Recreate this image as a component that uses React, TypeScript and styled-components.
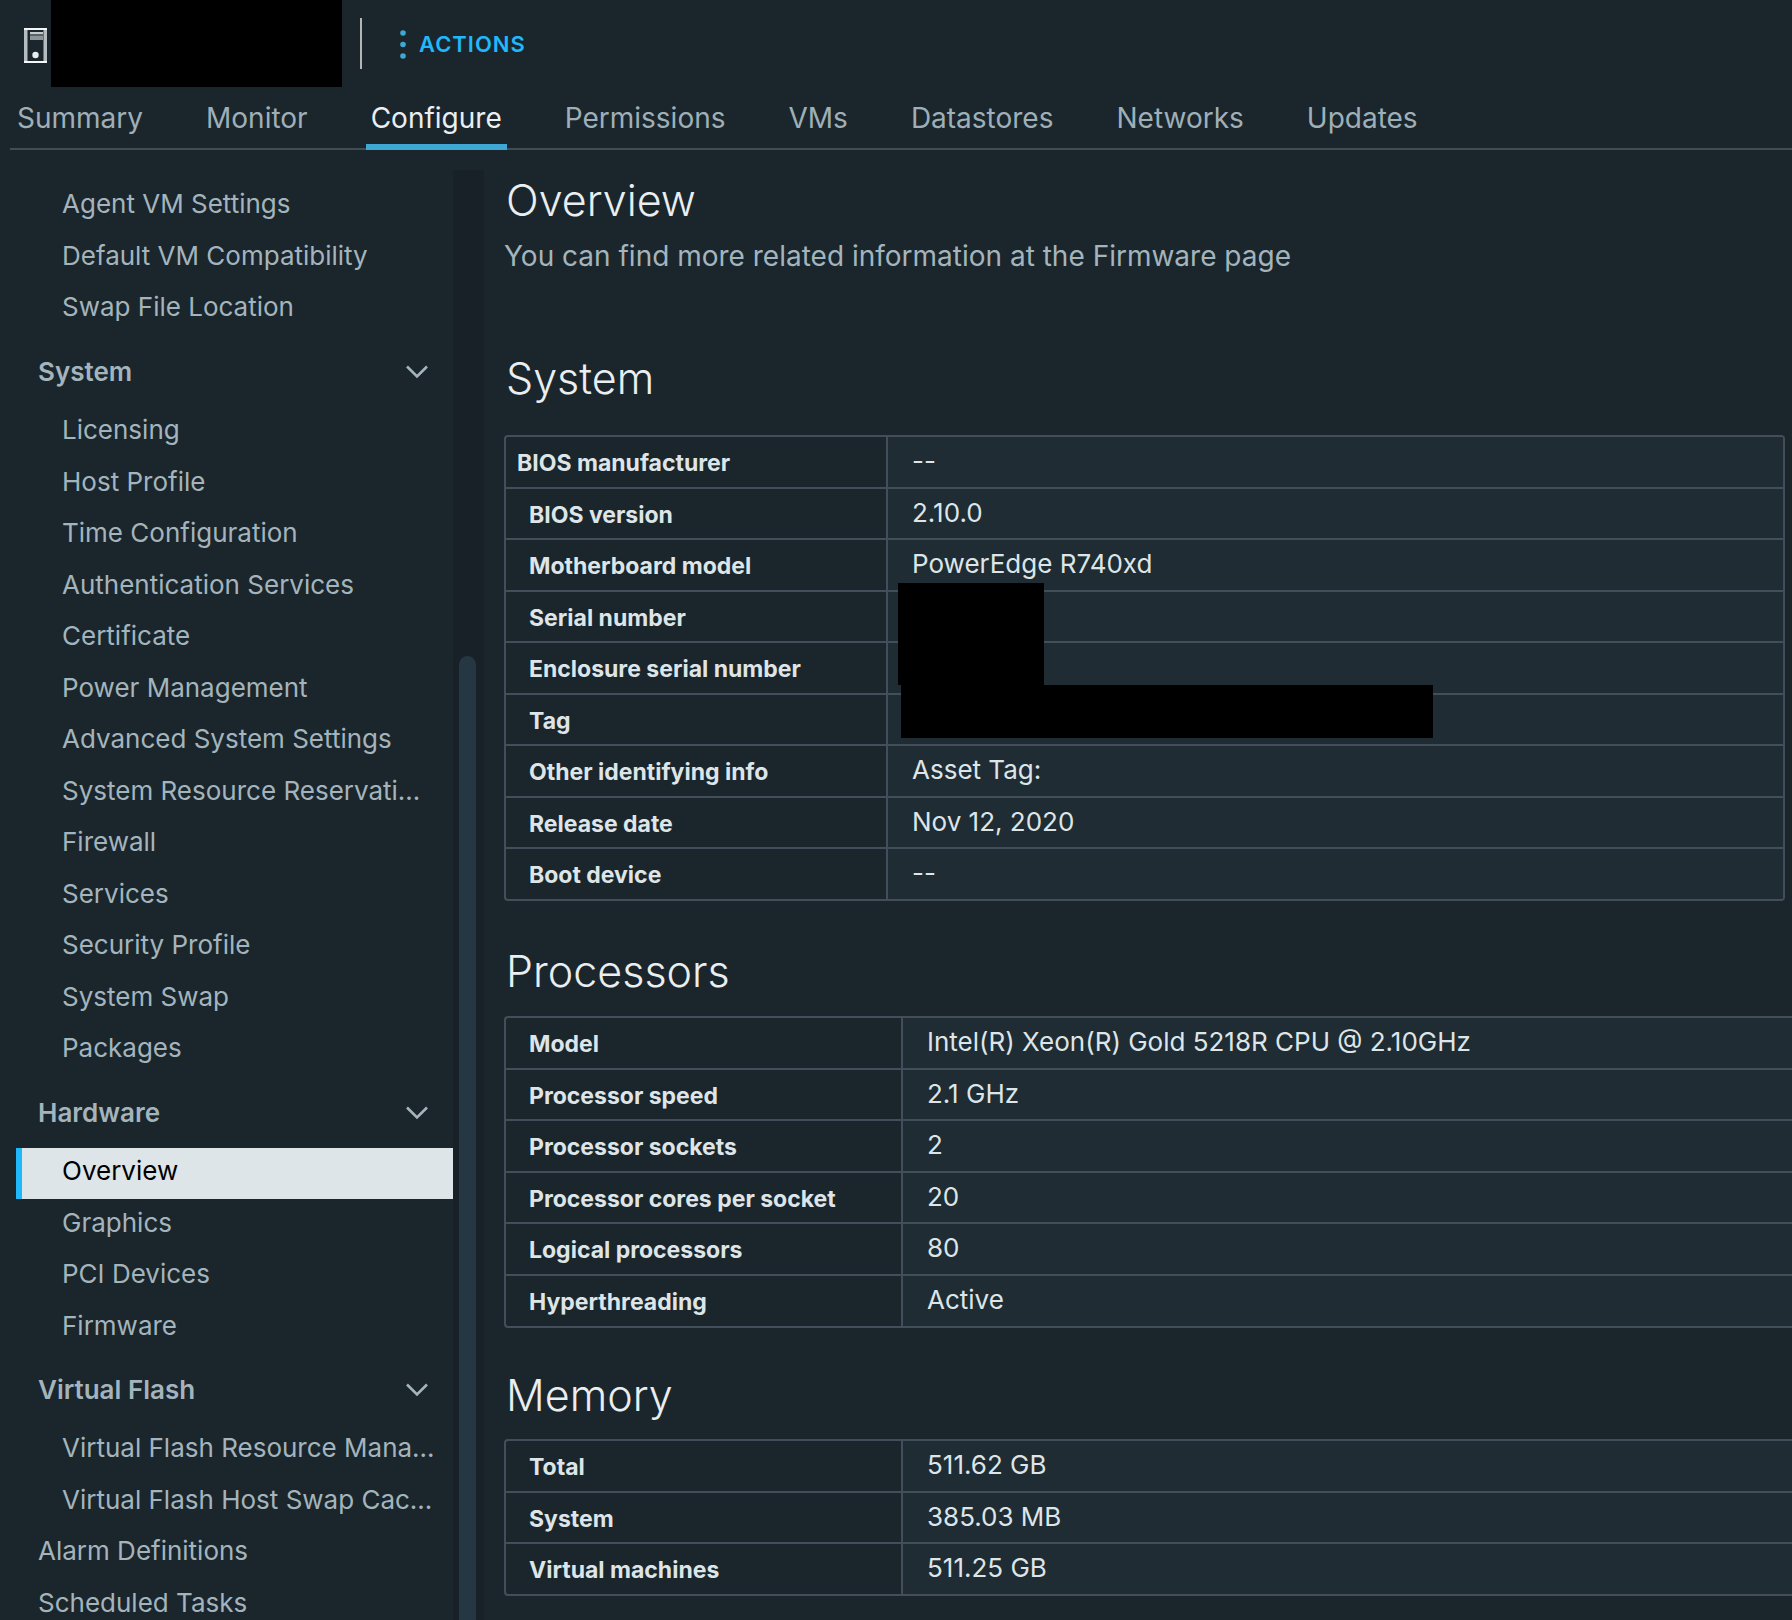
import React from "react";
import styled, { createGlobalStyle } from "styled-components";

const Global = createGlobalStyle`
  * { box-sizing: border-box; }
  body {
    margin: 0;
    background: #1a262c;
    color: #dee5e8;
    font-family: Inter, "Liberation Sans", sans-serif;
    -webkit-font-smoothing: antialiased;
  }
`;

const Page = styled.div`
  display: flex;
  flex-direction: column;
  height: 100vh;
  overflow: hidden;
`;

const Header = styled.header`
  display: flex;
  flex: none;
  align-items: flex-start;
  height: 87px;
  padding-left: 24px;
`;

const HostIcon = styled.svg`
  flex: none;
  width: 24px;
  height: 36px;
  margin-top: 28px;
`;

const HostName = styled.div`
  width: 291px;
  height: 87px;
  margin-left: 3px;
  background: #000;
`;

const Divider = styled.div`
  width: 2px;
  height: 51px;
  margin: 18px 38px 0 18px;
  background: #b5b5b5;
`;

const Actions = styled.button`
  display: flex;
  align-items: center;
  gap: 13px;
  height: 87px;
  padding: 0;
  border: 0;
  background: none;
  color: #21b8fb;
  font: 600 22px/24px Inter, "Liberation Sans", sans-serif;
  letter-spacing: 1px;
  cursor: pointer;
`;

const Tabs = styled.nav`
  display: flex;
  flex: none;
  gap: 53px;
  height: 63px;
  margin-left: 10px;
  padding-left: 2px;
  border-bottom: 2px solid #3f4d57;
`;

const Tab = styled.a<{ $active?: boolean }>`
  height: 63px;
  padding: 15px 5px 0;
  border-bottom: 6px solid ${(p) => (p.$active ? "#3ea7d3" : "transparent")};
  color: ${(p) => (p.$active ? "#e9eff2" : "#9fafb8")};
  font-size: 28px;
  line-height: 32px;
  text-decoration: none;
  white-space: nowrap;
`;

const Body = styled.div`
  display: flex;
  flex: 1;
  min-height: 0;
`;

const Sidebar = styled.nav`
  flex: none;
  width: 453px;
  padding: 29px 0 0 16px;
  overflow: hidden;
`;

const Group = styled.ul`
  margin: 0;
  padding: 0;
  list-style: none;
`;

const Item = styled.li`
  height: 52px;
  padding-top: 2px;
  &:nth-child(even) { height: 51px; }
`;

const ItemLink = styled.a<{ $active?: boolean; $top?: boolean }>`
  display: block;
  height: 51px;
  padding: 8px 16px 0 ${(p) => (p.$top ? 16 : 40)}px;
  border-left: 6px solid ${(p) => (p.$active ? "#21b8fb" : "transparent")};
  background: ${(p) => (p.$active ? "#dee5e8" : "none")};
  color: ${(p) => (p.$active ? "#000" : "#a4b4bd")};
  font-size: 26px;
  line-height: 30px;
  text-decoration: none;
  white-space: nowrap;
`;

const GroupTitle = styled.button`
  display: flex;
  align-items: center;
  justify-content: space-between;
  width: 100%;
  height: 71px;
  padding: 4px 24px 0 22px;
  border: 0;
  background: none;
  color: #a4b4bd;
  font: 600 26px/30px Inter, "Liberation Sans", sans-serif;
  cursor: pointer;
`;

const Track = styled.div`
  flex: none;
  width: 31px;
  margin-top: 20px;
  padding: 486px 8px 0 6px;
  background: #172127;
`;

const Thumb = styled.div`
  height: 100%;
  border-radius: 9px 9px 0 0;
  background: #253742;
`;

const Main = styled.main`
  flex: 1;
  min-width: 0;
  padding: 24px 0 0 20px;
`;

const Title = styled.h1`
  margin: 0;
  padding-left: 2px;
  color: #eaeef0;
  font-size: 43px;
  font-weight: 350;
  line-height: 52px;
`;

const Lead = styled.p`
  margin: 14px 0 0;
  color: #a4b4bd;
  font-size: 28px;
  line-height: 32px;
`;

const SectionTitle = styled(Title).attrs({ as: "h2" })<{ $above: number; $below: number }>`
  margin-top: ${(p) => p.$above}px;
  margin-bottom: ${(p) => p.$below}px;
`;

const TableFrame = styled.div<{ $open?: boolean }>`
  margin-right: ${(p) => (p.$open ? 0 : 7)}px;
  border: 2px solid #424f5a;
  border-radius: ${(p) => (p.$open ? "4px 0 0 4px" : "4px")};
  border-right-width: ${(p) => (p.$open ? 0 : 2)}px;
  overflow: hidden;
`;

const Table = styled.table`
  width: 100%;
  border-collapse: separate;
  border-spacing: 0;
  table-layout: fixed;
`;

const Row = styled.tr`
  height: 52px;
  &:nth-child(even) { height: 51px; }
  &:last-child { height: 50px; }
  & > * { border-bottom: 2px solid #424f5a; }
  &:last-child > * { border-bottom: 0; }
`;

const Label = styled.th<{ $width: number; $outdent?: boolean }>`
  width: ${(p) => p.$width}px;
  padding: 2px 0 0 ${(p) => (p.$outdent ? 11 : 23)}px;
  border-right: 2px solid #424f5a;
  font-size: 23px;
  font-weight: 700;
  line-height: 28px;
  text-align: left;
  white-space: nowrap;
`;

const Value = styled.td`
  position: relative;
  padding: 0 0 2px 24px;
  background: #1f2c33;
  font-size: 26px;
  line-height: 28px;
  white-space: nowrap;
`;

const Redaction = styled.span<{ $x: number; $y: number; $w: number; $h: number }>`
  position: absolute;
  z-index: 1;
  left: ${(p) => p.$x}px;
  top: ${(p) => p.$y}px;
  width: ${(p) => p.$w}px;
  height: ${(p) => p.$h}px;
  background: #000;
`;

const Chevron = () => (
  <svg width="24" height="16" viewBox="0 0 24 16" fill="none" stroke="#a4b4bd" strokeWidth="2.6" aria-hidden="true">
    <path d="M2 2.5 12 12.5 22 2.5" />
  </svg>
);

const Dots = () => (
  <svg width="6" height="30" viewBox="0 0 6 30" fill="#3ea7d3" aria-hidden="true">
    <circle cx="3" cy="4" r="2.8" />
    <circle cx="3" cy="15.5" r="2.8" />
    <circle cx="3" cy="27" r="2.8" />
  </svg>
);

type Entry = { text: string; active?: boolean };

const Items = ({ entries, top }: { entries: Entry[]; top?: boolean }) => (
  <Group>
    {entries.map((e) => (
      <Item key={e.text}>
        <ItemLink href="#" $active={e.active} $top={top} aria-current={e.active ? "page" : undefined}>
          {e.text}
        </ItemLink>
      </Item>
    ))}
  </Group>
);

const list = (...names: string[]): Entry[] => names.map((text) => ({ text }));

const groups = [
  {
    title: "System",
    entries: list(
      "Licensing", "Host Profile", "Time Configuration", "Authentication Services", "Certificate",
      "Power Management", "Advanced System Settings", "System Resource Reservati…", "Firewall",
      "Services", "Security Profile", "System Swap", "Packages"
    ),
  },
  {
    title: "Hardware",
    entries: [{ text: "Overview", active: true }, ...list("Graphics", "PCI Devices", "Firmware")],
  },
  { title: "Virtual Flash", entries: list("Virtual Flash Resource Mana…", "Virtual Flash Host Swap Cac…") },
];

type Cell = [string, React.ReactNode];

const system: Cell[] = [
  ["BIOS manufacturer", "--"],
  ["BIOS version", "2.10.0"],
  ["Motherboard model", "PowerEdge R740xd"],
  ["Serial number", <Redaction $x={10} $y={-9} $w={146} $h={102} />],
  ["Enclosure serial number", ""],
  ["Tag", <Redaction $x={13} $y={-10} $w={532} $h={53} />],
  ["Other identifying info", "Asset Tag:"],
  ["Release date", "Nov 12, 2020"],
  ["Boot device", "--"],
];

const processors: Cell[] = [
  ["Model", "Intel(R) Xeon(R) Gold 5218R CPU @ 2.10GHz"],
  ["Processor speed", "2.1 GHz"],
  ["Processor sockets", "2"],
  ["Processor cores per socket", "20"],
  ["Logical processors", "80"],
  ["Hyperthreading", "Active"],
];

const memory: Cell[] = [
  ["Total", "511.62 GB"],
  ["System", "385.03 MB"],
  ["Virtual machines", "511.25 GB"],
];

const Details = ({ rows, width, open, outdent }: { rows: Cell[]; width: number; open?: boolean; outdent?: boolean }) => (
  <TableFrame $open={open}>
    <Table>
      <tbody>
        {rows.map(([label, value], i) => (
          <Row key={label}>
            <Label scope="row" $width={width} $outdent={outdent && i === 0}>{label}</Label>
            <Value>{value}</Value>
          </Row>
        ))}
      </tbody>
    </Table>
  </TableFrame>
);

const tabs = ["Summary", "Monitor", "Configure", "Permissions", "VMs", "Datastores", "Networks", "Updates"];

export default function App() {
  return (
    <Page>
      <Global />
      <Header>
        <HostIcon viewBox="0 0 24 36" aria-hidden="true">
          <path d="M0 0h3.5v35H0zM19.5 0H23v35h-3.5z" fill="#b4bcbf" />
          <path d="M0 0h23v2H0zM0 33h23v2H0z" fill="#f4f6f7" />
          <path d="M6 4h13v2H6z" fill="#c3cacd" />
          <path d="M6 6h13v2H6z" fill="#59646a" />
          <path d="M6 8h13v4H6z" fill="#8b9498" />
          <circle cx="11.5" cy="27" r="3.2" fill="#e9eced" />
        </HostIcon>
        <HostName />
        <Divider />
        <Actions type="button"><Dots />ACTIONS</Actions>
      </Header>
      <Tabs aria-label="Host">
        {tabs.map((t) => (
          <Tab key={t} href="#" $active={t === "Configure"}>{t}</Tab>
        ))}
      </Tabs>
      <Body>
        <Sidebar aria-label="Configure">
          <Items entries={list("Agent VM Settings", "Default VM Compatibility", "Swap File Location")} />
          {groups.map((g) => (
            <React.Fragment key={g.title}>
              <GroupTitle type="button" aria-expanded="true">{g.title}<Chevron /></GroupTitle>
              <Items entries={g.entries} />
            </React.Fragment>
          ))}
          <Items top entries={list("Alarm Definitions", "Scheduled Tasks")} />
        </Sidebar>
        <Track><Thumb /></Track>
        <Main>
          <Title>Overview</Title>
          <Lead>You can find more related information at the Firmware page</Lead>
          <SectionTitle $above={80} $below={31}>System</SectionTitle>
          <Details rows={system} width={382} outdent />
          <SectionTitle $above={44} $below={19}>Processors</SectionTitle>
          <Details rows={processors} width={397} open />
          <SectionTitle $above={41} $below={18}>Memory</SectionTitle>
          <Details rows={memory} width={397} open />
        </Main>
      </Body>
    </Page>
  );
}
